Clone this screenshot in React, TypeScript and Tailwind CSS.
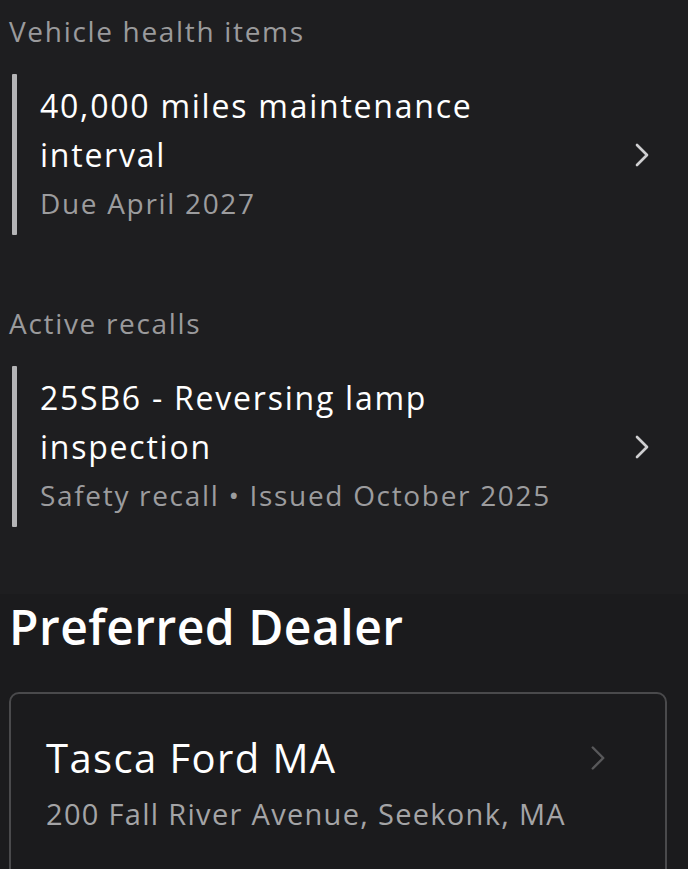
import { ChevronRight } from "lucide-react";

const font = { fontFamily: '"Open Sans", "Noto Sans", sans-serif' };

type Item = { title: string; sub: string };

const HealthRow = ({ item }: { item: Item }) => (
  <div className="mt-[23px] flex h-[161px] items-center">
    <div className="ml-[12px] h-full w-[5px] rounded-[1px] bg-[#b4b4b6]" />
    <div className="ml-[23px] flex flex-1 flex-col">
      <p className="w-[480px] text-[32px] leading-[49px] tracking-[0.055em] text-white">
        {item.title}
      </p>
      <p className="text-[28px] leading-[49px] tracking-[0.06em] text-[#9c9c9e]">
        {item.sub}
      </p>
    </div>
    <ChevronRight
      className="mr-[26px] h-[40px] w-[40px] text-[#cfcfd1]"
      strokeWidth={1.6}
    />
  </div>
);

export default function App() {
  return (
    <div className="min-h-[869px] w-full bg-[#1b1b1d]" style={font}>
      {/* health + recalls */}
      <section className="flex h-[594px] flex-col bg-[#1e1e20] pt-[11px]">
        <h3 className="pl-[9px] text-[28px] leading-[40px] tracking-[0.06em] text-[#9a9a9c]">
          Vehicle health items
        </h3>
        <HealthRow
          item={{ title: "40,000 miles maintenance interval", sub: "Due April 2027" }}
        />

        <h3 className="mt-[68px] pl-[9px] text-[28px] leading-[40px] tracking-[0.06em] text-[#9a9a9c]">
          Active recalls
        </h3>
        <HealthRow
          item={{
            title: "25SB6 - Reversing lamp inspection",
            sub: "Safety recall • Issued October 2025",
          }}
        />
      </section>

      {/* dealer */}
      <section className="px-[9px] pt-[3px]">
        <h2 className="text-[48px] font-semibold leading-[60px] tracking-[0.01em] text-white">
          Preferred Dealer
        </h2>
        <div className="mt-[35px] h-[200px] w-[658px] rounded-[10px] border-2 border-[#4a4a4c] bg-[#1b1b1d]">
          <div className="flex items-center pr-[46px] pl-[35px] pt-[36px]">
            <div className="flex flex-1 flex-col">
              <p className="text-[40px] font-medium leading-[56px] tracking-[0.035em] text-white">
                Tasca Ford MA
              </p>
              <p className="mt-[6px] text-[29px] leading-[44px] tracking-[0.045em] text-[#a4a4a6]">
                200 Fall River Avenue, Seekonk, MA
              </p>
            </div>
            <ChevronRight
              className="-mt-[50px] h-[42px] w-[42px] text-[#58585a]"
              strokeWidth={1.4}
            />
          </div>
        </div>
      </section>
    </div>
  );
}
